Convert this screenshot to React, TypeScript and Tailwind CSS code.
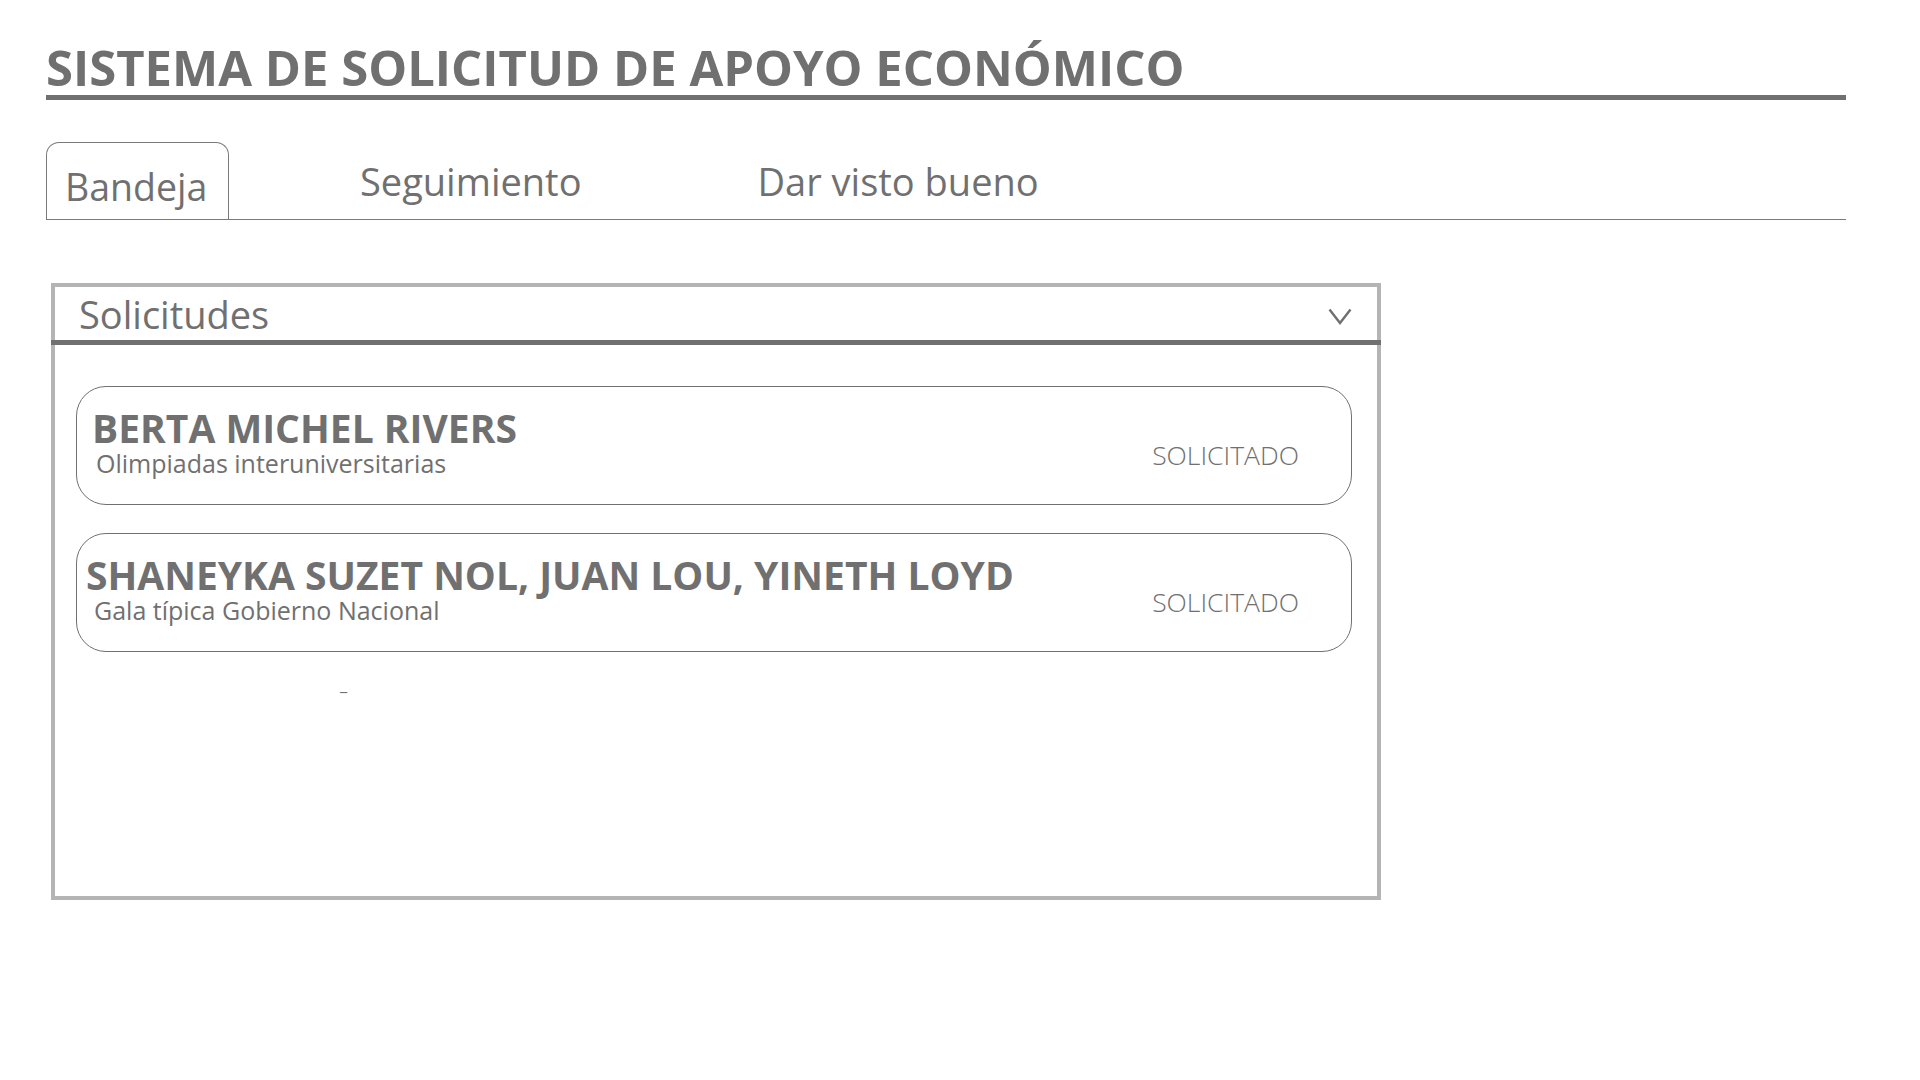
interface Solicitud {
  nombre: string;
  evento: string;
  estado: string;
  nameIndent: string;
  subIndent: string;
}

const solicitudes: Solicitud[] = [
  {
    nombre: 'BERTA MICHEL RIVERS',
    evento: 'Olimpiadas interuniversitarias',
    estado: 'SOLICITADO',
    nameIndent: 'pl-[15px]',
    subIndent: 'pl-[19px]',
  },
  {
    nombre: 'SHANEYKA SUZET NOL, JUAN LOU, YINETH LOYD',
    evento: 'Gala típica Gobierno Nacional',
    estado: 'SOLICITADO',
    nameIndent: 'pl-[9px]',
    subIndent: 'pl-[17px]',
  },
];

function Tabs() {
  return (
    <div className="flex items-end h-[120px] border-b border-[#7a7a7a]">
      <div className="w-[183px] h-[77px] border border-b-0 border-[#7a7a7a] rounded-t-[13px] pl-[18px] pt-[25px] text-[37.5px] leading-none">
        Bandeja
      </div>
      <div className="ml-[131px] mb-[19px] text-[38px] leading-none">Seguimiento</div>
      <div className="ml-[176px] mb-[19px] text-[38px] leading-none">Dar visto bueno</div>
    </div>
  );
}

function SolicitudCard({ s }: { s: Solicitud }) {
  return (
    <div className="h-[119px] border border-[#707070] rounded-[30px] flex items-start justify-between pr-[52px]">
      <div className="flex flex-col pt-[19px]">
        <span className={`${s.nameIndent} text-[39px] font-bold leading-[44px]`}>{s.nombre}</span>
        <span className={`${s.subIndent} text-[25px] leading-[26px]`}>{s.evento}</span>
      </div>
      <span className="mt-[55px] text-[26.5px] font-light leading-none">{s.estado}</span>
    </div>
  );
}

export default function App() {
  return (
    <div className="w-[1920px] h-[1080px] bg-white text-[#707070] font-['Open_Sans',sans-serif] overflow-hidden">
      <div className="pl-[46px] pr-[74px] pt-[42px]">
        <h1 className="text-[49px] font-bold leading-[50px]">
          SISTEMA DE SOLICITUD DE APOYO ECONÓMICO
        </h1>
        <div className="h-[5px] bg-[#707070] mt-[3px]" />
        <Tabs />

        <div className="ml-[5px] mt-[63px] w-[1330px] h-[617px] border-4 border-[#b4b4b4] flex flex-col">
          <div className="h-[53px] flex items-center justify-between pl-[24px] pr-[25px]">
            <span className="text-[38px] leading-none">Solicitudes</span>
            <svg width="24" height="17" viewBox="0 0 24 17" fill="none" className="mt-[6px]">
              <polyline points="1.5,1.5 12,15 22.5,1.5" stroke="#707070" strokeWidth="2.4" />
            </svg>
          </div>
          <div className="h-[5px] bg-[#707070] -mx-[4px]" />
          <div className="flex flex-col gap-[28px] pt-[41px] pl-[21px] pr-[25px]">
            {solicitudes.map((s) => (
              <SolicitudCard key={s.nombre} s={s} />
            ))}
          </div>
          <div className="pl-[285px] pt-[24px] text-[17px] font-semibold leading-none">_</div>
        </div>
      </div>
    </div>
  );
}
